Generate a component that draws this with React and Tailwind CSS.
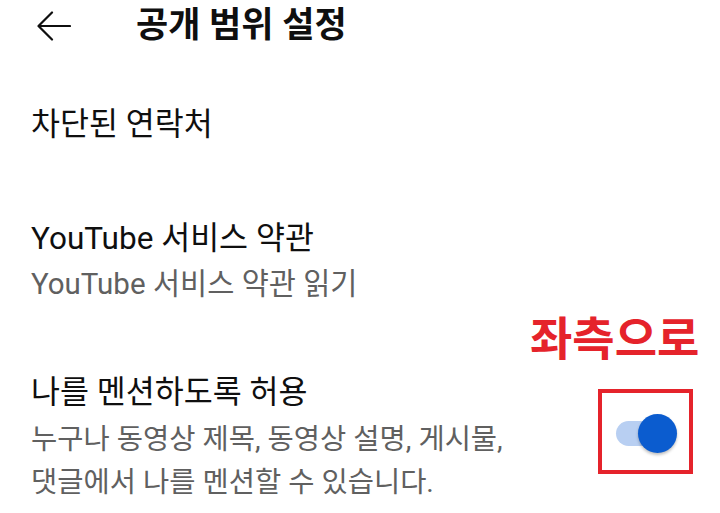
import { useState } from 'react'

const font = { fontFamily: 'Roboto, "Noto Sans CJK KR", sans-serif' }

function BackArrow() {
  return (
    <svg width="34" height="30" viewBox="0 0 34 30" fill="none" stroke="#0f0f0f" strokeWidth="2.2" strokeLinecap="round" strokeLinejoin="round">
      <path d="M33 15H2" />
      <path d="M15 1.5L1.5 15L15 28.5" />
    </svg>
  )
}

function Toggle({ on, onChange }) {
  return (
    <button onClick={() => onChange(!on)} className="relative w-[62px] h-[40px]">
      <span className="absolute left-0 top-[7px] w-[50px] h-[25px] rounded-full bg-[#b8cff2]" />
      <span
        className={
          'absolute top-0 w-[39px] h-[39px] rounded-full bg-[#0b5ccf] shadow-[0_2px_3px_rgba(0,0,0,0.25)] ' +
          (on ? 'left-[22px]' : 'left-0')
        }
      />
    </button>
  )
}

export default function App() {
  const [mention, setMention] = useState(true)

  return (
    <div className="relative w-[720px] h-[513px] bg-white overflow-hidden" style={font}>
      {/* Header */}
      <div className="flex items-center h-[52px] pl-[37px]">
        <BackArrow />
        <h1 className="ml-[65px] text-[35px] leading-[52px] font-bold text-[#0f0f0f]">공개 범위 설정</h1>
      </div>

      {/* Blocked contacts */}
      <div className="pl-[31px] mt-[51px]">
        <div className="text-[31.5px] leading-[44px] text-[#0f0f0f]">차단된 연락처</div>
      </div>

      {/* Terms */}
      <div className="pl-[31px] mt-[70px]">
        <div className="text-[31.5px] leading-[44px] text-[#0f0f0f]">YouTube 서비스 약관</div>
        <div className="mt-[1px] text-[29.5px] leading-[44px] text-[#606060]">YouTube 서비스 약관 읽기</div>
      </div>

      {/* Mentions */}
      <div className="flex items-start justify-between pl-[31px] pr-[27px] mt-[65px]">
        <div>
          <div className="text-[31.5px] leading-[44px] text-[#0f0f0f]">나를 멘션하도록 허용</div>
          <div className="mt-[3px] text-[28.5px] leading-[43px] text-[#606060]">
            <div>누구나 동영상 제목, 동영상 설명, 게시물,</div>
            <div>댓글에서 나를 멘션할 수 있습니다.</div>
          </div>
        </div>
        <div className="mt-[18px] w-[95px] h-[85px] shrink-0 border-4 border-[#e5232b] flex items-center justify-center pl-[2px] pt-[4px]">
          <Toggle on={mention} onChange={setMention} />
        </div>
      </div>

      {/* Annotation */}
      <div className="absolute left-[530px] top-[310px] text-[46px] leading-[58px] font-bold text-[#e5232b]">좌측으로</div>
    </div>
  )
}
